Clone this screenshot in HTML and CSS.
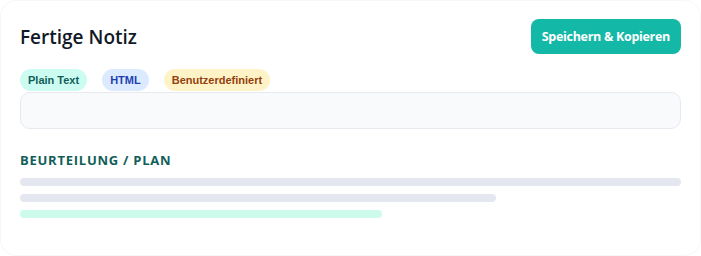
FILE: index.html
```html
<!DOCTYPE html>
<html lang="de">
<head>
    <meta charset="UTF-8">
    <meta name="viewport" content="width=device-width, initial-scale=1.0">
    <title>Fertige Notiz</title>
    <link rel="stylesheet" href="styles.css">
</head>
<body>
   <div class="card">
       <!--Kopf-->
       <div class="head">
           <h2 class="title">Fertige Notiz</h2>
           <a href="#" class="btn">Speichern &amp; Kopieren</a>
       </div>
       <!--Formate-->
       <ul class="tags">
           <li class="tag tag-text">Plain Text</li>
           <li class="tag tag-html">HTML</li>
           <li class="tag tag-custom">Benutzerdefiniert</li>
       </ul>
       <div class="output"></div>
       <!--Abschnitt-->
       <h3 class="section">BEURTEILUNG / PLAN</h3>
       <div class="lines">
           <span class="line" style="width: 100%"></span>
           <span class="line" style="width: 72%"></span>
           <span class="line line-accent" style="width: 54.8%"></span>
       </div>
   </div>
</body>
</html>
```

FILE: styles.css
```css
*{
    margin: 0;
    padding: 0;
    list-style: none;
    box-sizing: border-box;
}

body{
    background-color: #fff;
    font-family: "Open Sans", "Noto Sans", sans-serif;
    color: #111827;
}

.card{
    width: 701px;
    height: 256px;
    padding: 18px 19px 0 19px;
    border: 1px solid #f7f7f9;
    border-radius: 16px;
    background-color: #fff;
}

.head{
    display: flex;
    justify-content: space-between;
    align-items: center;
    height: 35px;
}

.title{
    font-size: 19px;
    font-weight: 600;
    color: #111827;
}

.btn{
    display: flex;
    align-items: center;
    height: 35px;
    padding: 0 11px 0 11px;
    border-radius: 8px;
    background-color: #14b8a6;
    color: #fff;
    font-size: 12.5px;
    font-weight: 700;
    text-decoration: none;
    letter-spacing: -0.3px;
}

.tags{
    display: flex;
    gap: 15px;
    margin-top: 15px;
}

.tag{
    height: 22px;
    padding: 0 8px;
    border-radius: 11px;
    display: flex;
    align-items: center;
    font-family: "Liberation Sans", Arial, sans-serif;
    font-size: 11px;
    font-weight: 700;
}

.tag-text{
    background-color: #ccfbf1;
    color: #115e59;
}

.tag-html{
    background-color: #dbeafe;
    color: #1e40af;
}

.tag-custom{
    background-color: #fef3c7;
    color: #92400e;
}

.output{
    height: 37px;
    margin-top: 1px;
    border: 1px solid #e8e9ee;
    border-radius: 10px;
    background-color: #f9fafb;
}

.section{
    margin-top: 22px;
    font-size: 13px;
    font-weight: 700;
    letter-spacing: 0.75px;
    color: #115e59;
    line-height: 18px;
}

.lines{
    display: flex;
    flex-direction: column;
    gap: 8px;
    margin-top: 9px;
}

.line{
    display: block;
    height: 8px;
    border-radius: 4px;
    background-color: #e5e7f0;
}

.line-accent{
    background-color: #ccfbec;
}
```
